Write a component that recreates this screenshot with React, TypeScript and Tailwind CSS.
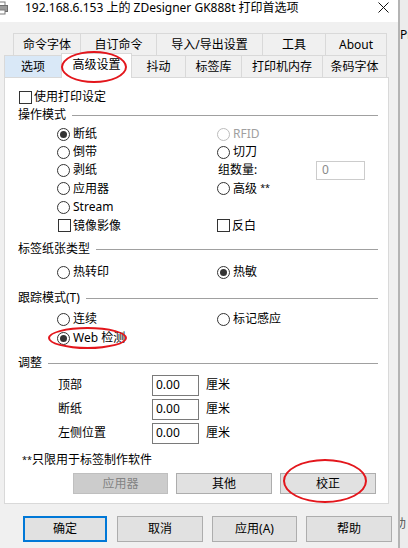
import React from "react";
import clsx from "clsx";

// Dialog "打印首选项" - Advanced settings tab

function Radio({ label, checked, disabled }: { label: React.ReactNode; checked?: boolean; disabled?: boolean }) {
  return (
    <div className="flex items-center gap-[3px]">
      <span
        className={clsx(
          "w-[13px] h-[13px] rounded-full border bg-white flex items-center justify-center shrink-0",
          disabled ? "border-[#bcbcbc]" : "border-[#333333]"
        )}
      >
        {checked && <span className="w-[7px] h-[7px] rounded-full bg-[#333333]" />}
      </span>
      <span className={disabled ? "text-[#a0a0a0]" : "text-black"}>{label}</span>
    </div>
  );
}

function Check({ label }: { label: string }) {
  return (
    <div className="flex items-center gap-[2px]">
      <span className="w-[13px] h-[13px] border border-[#333333] bg-white shrink-0" />
      <span>{label}</span>
    </div>
  );
}

function Group({ label, className }: { label: React.ReactNode; className: string }) {
  return (
    <div className={clsx("flex items-center", className)}>
      <span>{label}</span>
      <span className="flex-1 ml-[6px] h-px bg-[#a0a0a0]" />
    </div>
  );
}

const tabsTop = [
  { label: "命令字体", w: "w-[67px]" },
  { label: "自订命令", w: "w-[76px]" },
  { label: "导入/导出设置", w: "w-[106px]" },
  { label: "工具", w: "w-[63px]" },
  { label: "About", w: "w-[62px]" },
];

export default function App() {
  return (
    <div className="w-[408px] h-[548px] flex overflow-hidden bg-[#f0f0f0] text-[12px] leading-none text-black font-['Noto_Sans','Noto_Sans_CJK_SC',sans-serif]">
      <div className="w-[398px] shrink-0 flex flex-col relative">
        {/* title bar */}
        <div className="h-[22px] bg-white flex items-start">
          <svg width="8" height="14" viewBox="8 0 8 14" className="mt-[1px]">
            <rect x="3" y="1" width="10" height="4" fill="#ffffff" stroke="#7a7a7a" />
            <rect x="0.5" y="4.5" width="15" height="6" fill="#9a9a9a" stroke="#6e6e6e" />
            <rect x="3" y="9" width="10" height="4" fill="#ffffff" stroke="#7a7a7a" />
          </svg>
          <span className="ml-[17px] mt-[2px] text-[12px]">192.168.6.153 上的 ZDesigner GK888t 打印首选项</span>
          <svg width="11" height="11" viewBox="0 0 11 11" className="ml-auto mr-[9px] mt-[2px]">
            <path d="M0.5 0.5 L10.5 10.5 M10.5 0.5 L0.5 10.5" stroke="#111" strokeWidth="1" />
          </svg>
        </div>

        {/* tabs */}
        <div className="mt-[11px] ml-[13px] flex h-[22px]">
          {tabsTop.map((t, i) => (
            <div
              key={t.label}
              className={clsx(
                "border-t border-l border-[#d9d9d9] flex items-center justify-center",
                t.w,
                i === tabsTop.length - 1 && "border-r"
              )}
            >
              {t.label}
            </div>
          ))}
        </div>
        <div className="ml-[4px] flex items-end h-[22px] relative z-10">
          <div className="w-[57px] h-[22px] border-t border-l border-[#d9d9d9] bg-[#d9e8f7] flex items-center justify-center">选项</div>
          <div className="relative top-px w-[71px] h-[25px] border-t border-l border-r border-[#d9d9d9] bg-white flex items-center justify-center pb-[2px]">高级设置</div>
          <div className="w-[53px] h-[22px] border-t border-[#d9d9d9] flex items-center justify-center">抖动</div>
          <div className="w-[56px] h-[22px] border-t border-l border-[#d9d9d9] flex items-center justify-center">标签库</div>
          <div className="w-[81px] h-[22px] border-t border-l border-[#d9d9d9] flex items-center justify-center">打印机内存</div>
          <div className="w-[65px] h-[22px] border-t border-l border-r border-[#d9d9d9] flex items-center justify-center">条码字体</div>
        </div>

        {/* panel */}
        <div className="ml-[4px] w-[385px] h-[427px] border border-[#d9d9d9] bg-white flex flex-col pl-[13px] pr-[10px] pt-[11px]">
          <div className="h-[16px] flex items-center ml-px">
            <Check label="使用打印设定" />
          </div>
          <Group label="操作模式" className="h-[20px]" />
          <div className="ml-[39px] grid grid-cols-[160px_1fr]">
            <div className="h-[18px] flex items-center"><Radio label="断纸" checked /></div>
            <div className="h-[18px] flex items-center"><Radio label="RFID" disabled /></div>
            <div className="h-[18px] flex items-center"><Radio label="倒带" /></div>
            <div className="h-[18px] flex items-center"><Radio label="切刀" /></div>
            <div className="h-[18px] flex items-center"><Radio label="剥纸" /></div>
            <div className="h-[18px] flex items-center">
              <span className="ml-px w-[98px]">组数量:</span>
              <span className="w-[49px] h-[19px] border border-[#cccccc] bg-white flex items-center pl-[5px] text-[#8a8a8a]">0</span>
            </div>
            <div className="h-[19px] flex items-center"><Radio label="应用器" /></div>
            <div className="h-[19px] flex items-center">
              <Radio label={<>高级 <span className="text-[9px] align-top">**</span></>} />
            </div>
            <div className="h-[18px] flex items-center col-span-2"><Radio label="Stream" /></div>
            <div className="h-[19px] flex items-center ml-px"><Check label="镜像影像" /></div>
            <div className="h-[19px] flex items-center"><Check label="反白" /></div>
          </div>
          <Group label="标签纸张类型" className="h-[28px]" />
          <div className="ml-[39px] grid grid-cols-[160px_1fr]">
            <div className="h-[18px] flex items-center"><Radio label="热转印" /></div>
            <div className="h-[18px] flex items-center"><Radio label="热敏" checked /></div>
          </div>
          <Group label="跟踪模式(T)" className="mt-[6px] h-[22px]" />
          <div className="ml-[39px] grid grid-cols-[160px_1fr]">
            <div className="h-[20px] flex items-center"><Radio label="连续" /></div>
            <div className="h-[20px] flex items-center"><Radio label="标记感应" /></div>
            <div className="h-[18px] flex items-center col-span-2"><Radio label="Web 检测" checked /></div>
          </div>
          <Group label="调整" className="mt-[6px] h-[20px]" />
          <div className="ml-[40px] grid grid-cols-[94px_47px_auto] items-center">
            {["顶部", "断纸", "左侧位置"].map((l) => (
              <React.Fragment key={l}>
                <div className="h-[24px] flex items-center">{l}</div>
                <div className="h-[21px] border border-[#7a7a7a] bg-white flex items-center pl-[3px]">0.00</div>
                <div className="h-[24px] flex items-center ml-[7px]">厘米</div>
              </React.Fragment>
            ))}
          </div>
          <div className="h-[28px] flex items-center ml-[4px] pt-[2px]">
            <span className="text-[9px] self-start mt-[8px]">**</span>
            <span>只限用于标签制作软件</span>
          </div>
          <div className="ml-[55px] flex gap-[8px]">
            <div className="w-[95px] h-[21px] border border-[#bfbfbf] bg-[#cccccc] text-[#838383] flex items-center justify-center">应用器</div>
            <div className="w-[96px] h-[21px] border border-[#adadad] bg-[#e1e1e1] flex items-center justify-center">其他</div>
            <div className="w-[96px] h-[21px] border border-[#adadad] bg-[#e1e1e1] flex items-center justify-center">校正</div>
          </div>
        </div>

        {/* dialog buttons */}
        <div className="mt-[12px] ml-[23px] flex">
          <div className="w-[84px] h-[26px] border-2 border-[#0078d7] bg-[#e1e1e1] flex items-center justify-center">确定</div>
          <div className="ml-[10px] w-[86px] h-[26px] border border-[#adadad] bg-[#e1e1e1] flex items-center justify-center">取消</div>
          <div className="ml-[9px] w-[85px] h-[26px] border border-[#adadad] bg-[#e1e1e1] flex items-center justify-center">应用(A)</div>
          <div className="ml-[9px] w-[86px] h-[26px] border border-[#adadad] bg-[#e1e1e1] flex items-center justify-center">帮助</div>
        </div>

        {/* red annotation ellipses */}
        <div className="absolute left-[61px] top-[51px] w-[66px] h-[32px] rounded-[50%] border-[2.5px] border-[#e3161c] z-20 pointer-events-none" />
        <div className="absolute left-[48px] top-[327px] w-[79px] h-[22px] rounded-[50%] border-[2.5px] border-[#e3161c] z-20 pointer-events-none" />
        <div className="absolute left-[283px] top-[459px] w-[84px] h-[44px] rounded-[50%] border-[2.5px] border-[#e3161c] z-20 pointer-events-none" />
      </div>

      {/* neighbouring window edge */}
      <div className="w-[2px] bg-[#b4b4b4]" />
      <div className="flex-1 bg-[#ececec] flex flex-col overflow-hidden">
        <span className="mt-[29px] text-[12px] whitespace-nowrap">Pri</span>
        <span className="mt-auto mb-[18px] text-[12px] text-[#555] -ml-[6px]">助</span>
      </div>
    </div>
  );
}
